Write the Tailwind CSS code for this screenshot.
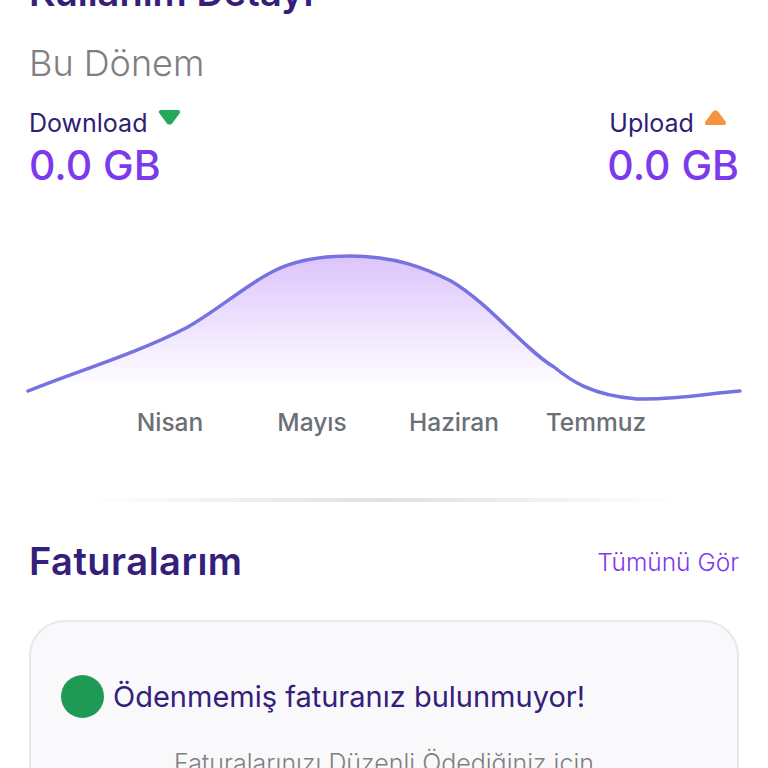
<!DOCTYPE html>
<html lang="tr">
<head>
    <meta charset="UTF-8">
    <meta name="viewport" content="width=device-width, initial-scale=1.0">
    <script src="https://cdn.jsdelivr.net/npm/@tailwindcss/browser@4"></script>
    <title>Kullanım Detayı</title>
</head>
<body class="bg-white overflow-hidden h-[768px] font-['Inter','Lato',sans-serif]">
    <!-- Top: page title is cut off by the screen edge -->
    <section class="-mt-[28px] px-[29px]">
        <h1 class="h-[40px] leading-[40px] text-[38px] font-semibold text-[#34207a]">Kullanım Detayı</h1>
        <p class="mt-[31px] h-[40px] leading-[40px] text-[36px] font-light text-[#808080]">Bu Dönem</p>
        <div class="mt-[25px] flex justify-between">
            <div>
                <div class="flex items-start h-[30px]">
                    <span class="leading-[30px] text-[25px] text-[#2f2072]">Download</span>
                    <svg class="ml-[11px] mt-[1px]" width="23" height="17" viewBox="0 0 23 17"><path d="M3.500 1h16c2.500 0 3.300 1.800 2 3.500l-7 9.500c-1.500 2-4.500 2-6 0l-7-9.500C.2 2.800 1 1 3.500 1z" fill="#27a75c"/></svg>
                </div>
                <p class="mt-[2px] h-[50px] leading-[50px] text-[41px] font-[450] text-[#7c3aed]">0.0 GB</p>
            </div>
            <div>
                <div class="flex items-start h-[30px]">
                    <span class="ml-[2px] leading-[30px] text-[25px] text-[#2f2072]">Upload</span>
                    <svg class="ml-[10px] mt-[1px]" width="23" height="17" viewBox="0 0 23 17"><path d="M3.500 16h16c2.500 0 3.300-1.800 2-3.500l-7-9.500c-1.500-2-4.500-2-6 0l-7 9.500C.2 14.200 1 16 3.500 16z" fill="#f59340"/></svg>
                </div>
                <p class="mt-[2px] h-[50px] leading-[50px] text-[41px] font-[450] text-[#7c3aed]">0.0 GB</p>
            </div>
        </div>
    </section>

    <!-- Usage chart -->
    <svg class="block mt-[30px]" width="768" height="190" viewBox="0 220 768 190">
        <defs>
            <linearGradient id="area" x1="0" y1="256" x2="0" y2="388" gradientUnits="userSpaceOnUse">
                <stop offset="0" stop-color="#dcc4fd"/>
                <stop offset="1" stop-color="#ffffff"/>
            </linearGradient>
        </defs>
        <path d="M28 391C80 370 135 354 186 328C215 312 245 286 270 273C295 259 325 256 350 256C395 256 425 268 451 281C490 304 525 350 554 367C570 380 590 395 637 399C680 400 710 393 740 391V391H28Z" fill="url(#area)"/>
        <path d="M28 391C80 370 135 354 186 328C215 312 245 286 270 273C295 259 325 256 350 256C395 256 425 268 451 281C490 304 525 350 554 367C570 380 590 395 637 399C680 400 710 393 740 391" fill="none" stroke="#7672e0" stroke-width="3.500" stroke-linecap="round"/>
    </svg>
    <div class="flex pl-[99px] h-[30px] mt-[-3px]">
        <span class="w-[142px] text-center leading-[30px] text-[24.500px] font-medium text-[#6b7076]">Nisan</span>
        <span class="w-[142px] text-center leading-[30px] text-[24.500px] font-medium text-[#6b7076]">Mayıs</span>
        <span class="w-[142px] text-center leading-[30px] text-[24.500px] font-medium text-[#6b7076]">Haziran</span>
        <span class="w-[142px] text-center leading-[30px] text-[24.500px] font-medium text-[#6b7076]">Temmuz</span>
    </div>

    <!-- Divider -->
    <div class="mt-[61px] mx-[85px] h-[4px] bg-gradient-to-r from-transparent via-[#dde0e6] to-transparent"></div>

    <!-- Invoices -->
    <section class="px-[29px]">
        <div class="mt-[37px] flex justify-between items-center h-[44px]">
            <h2 class="text-[38px] font-semibold tracking-[0.5px] text-[#34207a]">Faturalarım</h2>
            <a class="pt-[3px] text-[24.500px] font-light text-[#7c3aed]" href="#">Tümünü Gör</a>
        </div>
        <div class="mt-[37px] h-[300px] rounded-[36px] border-2 border-[#e8e8ec] bg-[#f9f9fb] px-[30px] pt-[53px]">
            <div class="flex items-center gap-[9px]">
                <span class="w-[43px] h-[43px] rounded-full bg-[#1f9a55]"></span>
                <span class="text-[29px] text-[#34207a]">Ödenmemiş faturanız bulunmuyor!</span>
            </div>
            <p class="mt-[26px] text-center text-[25px] font-light text-[#808080]">Faturalarınızı Düzenli Ödediğiniz için</p>
        </div>
    </section>
</body>
</html>
